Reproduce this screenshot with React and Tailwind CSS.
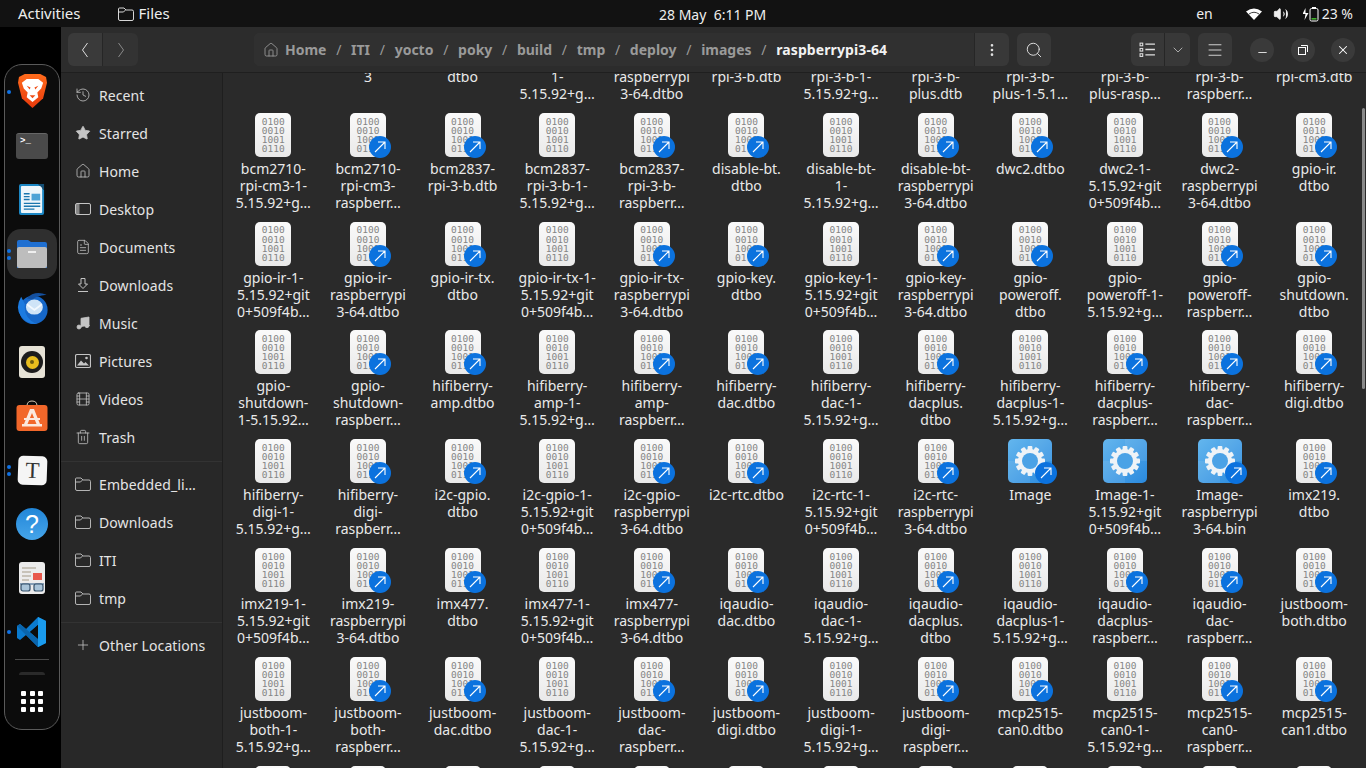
import React from "react";
import { ChevronDown, Search, EllipsisVertical, Menu, X, Minus, Plus, History, Star, House, FileText, Music, Film, Trash2, Volume2 } from "lucide-react";

const L = (lines, real) => ({ lines, link: !real });
const G = (lines, real) => ({ lines, link: !real, gear: true });

const rows = [
  [L([""], true), L(["bcm2710-", "3"]), L(["bcm2711-", "dtbo"]), L(["bcm2711-", "1-", "5.15.92+g…"], true), L(["bcm2711-", "raspberrypi", "3-64.dtbo"]), L(["bcm2837-", "rpi-3-b.dtb"]), L(["bcm2837-", "rpi-3-b-1-", "5.15.92+g…"], true), L(["bcm2837-", "rpi-3-b-", "plus.dtb"]), L(["bcm2837-", "rpi-3-b-", "plus-1-5.1…"], true), L(["bcm2837-", "rpi-3-b-", "plus-rasp…"]), L(["bcm2837-", "rpi-3-b-", "raspberr…"]), L(["bcm2710-", "rpi-cm3.dtb"])],
  [L(["bcm2710-", "rpi-cm3-1-", "5.15.92+g…"], true), L(["bcm2710-", "rpi-cm3-", "raspberr…"]), L(["bcm2837-", "rpi-3-b.dtb"]), L(["bcm2837-", "rpi-3-b-1-", "5.15.92+g…"], true), L(["bcm2837-", "rpi-3-b-", "raspberr…"]), L(["disable-bt.", "dtbo"]), L(["disable-bt-", "1-", "5.15.92+g…"], true), L(["disable-bt-", "raspberrypi", "3-64.dtbo"]), L(["dwc2.dtbo"]), L(["dwc2-1-", "5.15.92+git", "0+509f4b…"], true), L(["dwc2-", "raspberrypi", "3-64.dtbo"]), L(["gpio-ir.", "dtbo"])],
  [L(["gpio-ir-1-", "5.15.92+git", "0+509f4b…"], true), L(["gpio-ir-", "raspberrypi", "3-64.dtbo"]), L(["gpio-ir-tx.", "dtbo"]), L(["gpio-ir-tx-1-", "5.15.92+git", "0+509f4b…"], true), L(["gpio-ir-tx-", "raspberrypi", "3-64.dtbo"]), L(["gpio-key.", "dtbo"]), L(["gpio-key-1-", "5.15.92+git", "0+509f4b…"], true), L(["gpio-key-", "raspberrypi", "3-64.dtbo"]), L(["gpio-", "poweroff.", "dtbo"]), L(["gpio-", "poweroff-1-", "5.15.92+g…"], true), L(["gpio-", "poweroff-", "raspberr…"]), L(["gpio-", "shutdown.", "dtbo"])],
  [L(["gpio-", "shutdown-", "1-5.15.92…"], true), L(["gpio-", "shutdown-", "raspberr…"]), L(["hifiberry-", "amp.dtbo"]), L(["hifiberry-", "amp-1-", "5.15.92+g…"], true), L(["hifiberry-", "amp-", "raspberr…"]), L(["hifiberry-", "dac.dtbo"]), L(["hifiberry-", "dac-1-", "5.15.92+g…"], true), L(["hifiberry-", "dacplus.", "dtbo"]), L(["hifiberry-", "dacplus-1-", "5.15.92+g…"], true), L(["hifiberry-", "dacplus-", "raspberr…"]), L(["hifiberry-", "dac-", "raspberr…"]), L(["hifiberry-", "digi.dtbo"])],
  [L(["hifiberry-", "digi-1-", "5.15.92+g…"], true), L(["hifiberry-", "digi-", "raspberr…"]), L(["i2c-gpio.", "dtbo"]), L(["i2c-gpio-1-", "5.15.92+git", "0+509f4b…"], true), L(["i2c-gpio-", "raspberrypi", "3-64.dtbo"]), L(["i2c-rtc.dtbo"]), L(["i2c-rtc-1-", "5.15.92+git", "0+509f4b…"], true), L(["i2c-rtc-", "raspberrypi", "3-64.dtbo"]), G(["Image"]), G(["Image-1-", "5.15.92+git", "0+509f4b…"], true), G(["Image-", "raspberrypi", "3-64.bin"]), L(["imx219.", "dtbo"])],
  [L(["imx219-1-", "5.15.92+git", "0+509f4b…"], true), L(["imx219-", "raspberrypi", "3-64.dtbo"]), L(["imx477.", "dtbo"]), L(["imx477-1-", "5.15.92+git", "0+509f4b…"], true), L(["imx477-", "raspberrypi", "3-64.dtbo"]), L(["iqaudio-", "dac.dtbo"]), L(["iqaudio-", "dac-1-", "5.15.92+g…"], true), L(["iqaudio-", "dacplus.", "dtbo"]), L(["iqaudio-", "dacplus-1-", "5.15.92+g…"], true), L(["iqaudio-", "dacplus-", "raspberr…"]), L(["iqaudio-", "dac-", "raspberr…"]), L(["justboom-", "both.dtbo"])],
  [L(["justboom-", "both-1-", "5.15.92+g…"], true), L(["justboom-", "both-", "raspberr…"]), L(["justboom-", "dac.dtbo"]), L(["justboom-", "dac-1-", "5.15.92+g…"], true), L(["justboom-", "dac-", "raspberr…"]), L(["justboom-", "digi.dtbo"]), L(["justboom-", "digi-1-", "5.15.92+g…"], true), L(["justboom-", "digi-", "raspberr…"]), L(["mcp2515-", "can0.dtbo"]), L(["mcp2515-", "can0-1-", "5.15.92+g…"], true), L(["mcp2515-", "can0-", "raspberr…"]), L(["mcp2515-", "can1.dtbo"])],
  [L(["mcp2515-"], true), L(["mcp2515-"]), L(["mcp2515-"]), L(["mcp2515-"], true), L(["mcp2515-"]), L(["mcp2515-"]), L(["mcp2515-"], true), L(["mcp2515-"]), L(["mcp2515-"]), L(["mcp2515-"], true), L(["mcp2515-"]), L(["mcp2515-"])],
];

const places = [
  ["Recent", History], ["Starred", StarGlyph], ["Home", House], ["Desktop", DesktopGlyph], ["Documents", FileText],
  ["Downloads", DownloadGlyph], ["Music", MusicGlyph], ["Pictures", PictureGlyph], ["Videos", Film], ["Trash", Trash2],
];
const bookmarks = ["Embedded_li…", "Downloads", "ITI", "tmp"];
const crumbs = ["ITI", "yocto", "poky", "build", "tmp", "deploy", "images"];

function StarGlyph(props) {
  return <Star {...props} fill="currentColor" />;
}

function MusicGlyph(props) {
  return <Music {...props} fill="currentColor" />;
}

function DesktopGlyph(props) {
  return (
    <svg viewBox="0 0 16 16" {...props}>
      <rect x="0.5" y="2.5" width="15" height="11" rx="1.5" fill="none" stroke="currentColor" strokeWidth="1" />
      <rect x="1" y="3" width="3.5" height="10" fill="currentColor" opacity="0.6" />
    </svg>
  );
}

function DownloadGlyph(props) {
  return (
    <svg viewBox="0 0 16 16" {...props} fill="none" stroke="currentColor" strokeWidth="1">
      <path d="M6 1.5 H10 V7 H12.5 L8 11.5 L3.5 7 H6 Z M3 14.5 H13" />
    </svg>
  );
}

function PictureGlyph(props) {
  return (
    <svg viewBox="0 0 16 16" {...props}>
      <rect x="0.5" y="1.5" width="15" height="13" rx="1.5" fill="none" stroke="currentColor" />
      <path d="M2 12.5 L6 7.5 L9 10.5 L10.5 9 L14 12.5 Z" fill="currentColor" />
      <circle cx="11.5" cy="5" r="1.3" fill="currentColor" />
    </svg>
  );
}

function FolderGlyph(props) {
  return (
    <svg viewBox="0 0 16 16" {...props} fill="none" stroke="currentColor" strokeWidth="0.9">
      <path d="M1.5 2 H6 L8 4 H14 Q15.5 4 15.5 5.5 V13 Q15.5 14.5 14 14.5 H2 Q0.5 14.5 0.5 13 V3 Q0.5 2 1.5 2 Z M0.5 6 H5.5 L7.5 4" />
    </svg>
  );
}

function ListGlyph(props) {
  return (
    <svg viewBox="0 0 16 16" {...props} fill="none" stroke="currentColor" strokeWidth="1">
      <rect x="1" y="2" width="2.5" height="2.5" />
      <rect x="1" y="7" width="2.5" height="2.5" />
      <rect x="1" y="12" width="2.5" height="2.5" />
      <path d="M6 3 H15 M6 8 H15 M6 13 H15" strokeWidth="1.2" />
    </svg>
  );
}

function LinkBadge() {
  return (
    <div className="absolute -right-[5px] -bottom-[1px] w-[22px] h-[22px] rounded-full bg-[#0b72de] flex items-center justify-center">
      <svg viewBox="0 0 12 12" className="w-3 h-3" fill="none" stroke="white" strokeWidth="1.1">
        <path d="M1 11 L11 1 M4 1 H11 V8" />
      </svg>
    </div>
  );
}

function BinaryIcon({ link }) {
  return (
    <div className="relative w-9 h-11 rounded-[5px] bg-gradient-to-b from-[#fafafa] to-[#e9e9e9] flex flex-col items-center justify-center font-['DejaVu_Sans_Mono',monospace] text-[9.5px] leading-[9.1px] text-[#858585]">
      <span>0100</span>
      <span>0010</span>
      <span>1001</span>
      <span>0110</span>
      {link && <LinkBadge />}
    </div>
  );
}

function GearIcon({ link }) {
  return (
    <div className="relative w-11 h-11 rounded-[5px] overflow-visible">
      <svg viewBox="0 0 44 44" className="w-11 h-11">
        <defs>
          <linearGradient id="tile" x1="0" y1="0" x2="1" y2="1">
            <stop offset="0" stopColor="#64b6ee" />
            <stop offset="1" stopColor="#2a8ade" />
          </linearGradient>
        </defs>
        <rect width="44" height="44" rx="5" fill="url(#tile)" />
        <path d="M0 22 H22 V44 H5 Q0 44 0 39 Z M22 0 H39 Q44 0 44 5 V22 H22 Z" fill="white" opacity="0.08" />
        <g fill="#eef3f7">
          {[0, 30, 60, 90, 120, 150].map((a) => (
            <rect key={a} x="19.6" y="7" width="4.8" height="30" rx="1" transform={`rotate(${a} 22 22)`} />
          ))}
          <circle cx="22" cy="22" r="12" />
        </g>
        <circle cx="22" cy="22" r="8" fill="#4aa2e6" />
      </svg>
      {link && <LinkBadge />}
    </div>
  );
}

function FileCell({ file }) {
  return (
    <div className="flex flex-col items-center min-w-0">
      <div className="h-11 flex items-center justify-center">
        {file.gear ? <GearIcon link={file.link} /> : <BinaryIcon link={file.link} />}
      </div>
      <div className="mt-[3px] text-center text-[14px] leading-[17px] text-[#e9e9e9] whitespace-nowrap">
        {file.lines.map((l, i) => (
          <div key={i}>{l || "\u00a0"}</div>
        ))}
      </div>
    </div>
  );
}

function DockIcon({ children, dots = 0, active }) {
  return (
    <div className={`relative w-[50px] h-[50px] flex items-center justify-center rounded-[14px] ${active ? "bg-[#2f2f2f]" : ""}`}>
      {dots > 0 && (
        <div className="absolute left-0 top-0 bottom-0 flex flex-col justify-center gap-[3px]">
          {Array.from({ length: dots }).map((_, i) => (
            <span key={i} className="block w-1 h-1 rounded-full bg-[#0f72e5]" />
          ))}
        </div>
      )}
      {children}
    </div>
  );
}

function Dock() {
  return (
    <div className="w-[61px] shrink-0 bg-black pt-[37px]">
      <div className="ml-[4px] w-[56px] h-[666px] rounded-[18px] border border-[#5a5a5a] bg-[#0c0c0c] flex flex-col items-center pt-[2px] gap-[4px]">
        <DockIcon dots={1}>
          <svg viewBox="0 0 30 35" className="w-[29px] h-[34px] -translate-y-px">
            <defs>
              <linearGradient id="br" x1="0" y1="0" x2="0" y2="1">
                <stop offset="0" stopColor="#ff6b1c" />
                <stop offset="1" stopColor="#e83a0c" />
              </linearGradient>
            </defs>
            <path d="M7 0 H23 L29 3 L30 9 L26 25 L15 35 L4 25 L0 9 L1 3 Z" fill="url(#br)" />
            <path d="M4 9 L9 5 H21 L26 9 L24 15 L20 19 L21 24 L15 29 L9 24 L10 19 L6 15 Z" fill="white" />
            <path d="M9 12 L13 14 L12 16 Z M21 12 L17 14 L18 16 Z M12 22 H18 L15 25 Z" fill="#f0501a" />
          </svg>
        </DockIcon>
        <DockIcon>
          <div className="w-8 h-[26px] rounded-[3px] bg-[#4a4a4a] border-t border-[#666] text-white font-['Liberation_Mono',monospace] text-[9px] leading-[12px] pl-1 pt-[1px] font-bold">&gt;_</div>
        </DockIcon>
        <DockIcon>
          <svg viewBox="0 0 28 33" className="w-[27px] h-[32px]">
            <path d="M2 0 H20 L26 6 V30 Q26 32 24 32 H2 Q0 32 0 30 V2 Q0 0 2 0 Z" fill="#1c87c4" />
            <rect x="2" y="2" width="22" height="28" rx="1" fill="#eef6fb" />
            <path d="M20 0 L26 0 L26 6 Z" fill="#144e74" />
            <rect x="13" y="10" width="9" height="7" fill="#4ea3d6" />
            <path d="M5 10 H11 M5 13 H11 M5 16 H11 M5 20 H22 M5 23 H22 M5 26 H16" stroke="#1a76ae" strokeWidth="1.4" />
          </svg>
        </DockIcon>
        <DockIcon dots={2} active>
          <svg viewBox="0 0 32 30" className="w-[32px] h-[30px]">
            <path d="M1 3 Q1 1 3 1 H12 L15 3 H29 Q31 3 31 5 V29 H1 Z" fill="#1f6fd1" />
            <rect x="1" y="8" width="30" height="21" rx="2" fill="#bdbdbd" />
            <rect x="12" y="12" width="8" height="2" fill="#efefef" />
          </svg>
        </DockIcon>
        <DockIcon>
          <svg viewBox="0 0 36 36" className="w-[35px] h-[34px]">
            <circle cx="19" cy="20" r="15" fill="#1667c8" />
            <path d="M6 6 Q-1 18 6 27 Q12 35 22 35 Q8 28 10 14 Z" fill="#1c7be0" />
            <path d="M12 8 Q20 -1 33 4 Q22 5 18 9 Z" fill="#14509f" />
            <ellipse cx="20" cy="17" rx="9" ry="8" fill="#cfe4f7" />
            <path d="M12 14 L20 20 L28 14" fill="none" stroke="#f3f9fe" strokeWidth="2" />
          </svg>
        </DockIcon>
        <DockIcon>
          <div className="w-[26px] h-8 rounded-[3px] bg-[#e6e2d6] flex items-center justify-center">
            <div className="w-[22px] h-[22px] rounded-full bg-[#1c1c1c] flex items-center justify-center">
              <div className="w-[13px] h-[13px] rounded-full bg-[#e8bd1e] flex items-center justify-center">
                <div className="w-1 h-1 rounded-full bg-[#6b5a10]" />
              </div>
            </div>
          </div>
        </DockIcon>
        <DockIcon>
          <svg viewBox="0 0 32 32" className="w-8 h-8">
            <path d="M11 6 Q11 1 16 1 Q21 1 21 6" fill="none" stroke="#d9c9b5" strokeWidth="1" />
            <rect x="0.5" y="5" width="31" height="26" rx="3" fill="#f2672a" />
            <path d="M14 9 H18 L24 24 H20.5 L16 13 L11.5 24 H8 Z M8 18 H24 V20 H8 Z M6 24 H26 V26.5 H6 Z" fill="#fbe9df" />
          </svg>
        </DockIcon>
        <DockIcon dots={2}>
          <div className="w-[29px] h-[29px] rounded-[5px] bg-[#f5f5f5] rotate-[2deg] flex items-center justify-center font-['Liberation_Serif',serif] text-[23px] text-[#333] leading-none">T</div>
        </DockIcon>
        <DockIcon>
          <div className="w-8 h-8 rounded-full bg-gradient-to-b from-[#2186d8] to-[#45a5ea] flex items-center justify-center text-white text-[25px] leading-none font-['Liberation_Sans',sans-serif]">?</div>
        </DockIcon>
        <DockIcon>
          <svg viewBox="0 0 26 32" className="w-[26px] h-8">
            <rect width="26" height="32" rx="3" fill="#ececec" />
            <path d="M3 6 H17 M3 10 H12 M3 14 H12 M3 18 H10" stroke="#a49a86" strokeWidth="1.2" />
            <rect x="14" y="11" width="9" height="7" fill="#e8584c" />
            <path d="M1 22 H25" stroke="#5c7fa0" strokeWidth="1.4" />
            <rect x="2" y="22" width="9" height="7" rx="2" fill="#a9c4d9" stroke="#34506a" strokeWidth="1.2" />
            <rect x="15" y="22" width="9" height="7" rx="2" fill="#a9c4d9" stroke="#34506a" strokeWidth="1.2" />
          </svg>
        </DockIcon>
        <DockIcon dots={1}>
          <svg viewBox="0 0 30 30" className="w-[30px] h-[30px]">
            <path d="M21 0 L29 4 V26 L21 30 L9 18 L3 23 L0 21 V9 L3 7 L9 12 Z M21 8 L13 15 L21 22 Z" fill="#0a7bd0" />
            <path d="M21 0 L29 4 V26 L21 30 Z" fill="#1a9bee" />
            <path d="M21 8 L21 22 L13 15 Z" fill="#0c0c0c" />
            <path d="M0 9 L3 7 L21 22 V30 Z" fill="#0a65ad" />
          </svg>
        </DockIcon>
        <div className="w-[34px] h-px bg-[#4a4a4a] -mt-[2px]" />
        <div className="w-[26px] h-[3px] rounded-t-full bg-[#2a2a2a] mt-[8px]" />
        <div className="grid grid-cols-3 gap-x-[3.5px] gap-y-[3px] mt-[12px]">
          {Array.from({ length: 9 }).map((_, i) => (
            <span key={i} className="w-[5px] h-[5px] rounded-[1px] bg-white" />
          ))}
        </div>
      </div>
    </div>
  );
}

function TopBar() {
  return (
    <div className="relative h-[27px] shrink-0 bg-[#121212] text-[#eeeeee] text-[14px] flex items-center">
      <span className="ml-[18px] text-[15px]">Activities</span>
      <FolderGlyph className="ml-[37px] w-4 h-4" />
      <span className="ml-[5px] text-[15px]">Files</span>
      <span className="absolute left-[659px] top-[4px]">28 May&nbsp;&nbsp;6:11 PM</span>
      <div className="ml-auto flex items-center mr-[13px]">
        <span className="mr-[33px]">en</span>
        <svg viewBox="0 0 16 12" className="w-4 h-3 mr-[11px]">
          <path d="M0 3.5 Q8 -2.5 16 3.5 L8 12 Z" fill="white" />
          <path d="M3 6 Q8 2.5 13 6" fill="none" stroke="#121212" strokeWidth="0.8" />
        </svg>
        <Volume2 className="w-4 h-4 mr-[14px]" fill="currentColor" strokeWidth={1.3} />
        <svg viewBox="0 0 16 16" className="w-4 h-4 mr-[3px]">
          <path d="M3 2 L0 8 H3 L2 14 L6 7 H3 Z" fill="white" transform="translate(-0.5 0)" />
          <rect x="7" y="2.5" width="8" height="12.5" rx="1.5" fill="none" stroke="white" />
          <rect x="9" y="1" width="4" height="1.5" fill="white" />
          <rect x="8.5" y="12" width="5" height="1.6" fill="#3fae2a" />
        </svg>
        <span>23 %</span>
      </div>
    </div>
  );
}

function Header() {
  return (
    <div className="h-[46px] shrink-0 bg-[#2c2c2c] border-b border-[#1f1f1f] flex items-center text-[#c8c8c8] pr-[11px]">
      <div className="ml-[7px] flex h-[33px] w-[70px] rounded-[6px] overflow-hidden bg-[#333333]">
        <div className="w-[35px] flex items-center justify-center border-r border-[#262626] bg-[#3a3a3a] text-[#dddddd]">
          <svg viewBox="0 0 8 16" className="w-2 h-4" fill="none" stroke="currentColor"><path d="M6.5 1 L1.5 8 L6.5 15" /></svg>
        </div>
        <div className="w-[35px] flex items-center justify-center text-[#8a8a8a]">
          <svg viewBox="0 0 8 16" className="w-2 h-4" fill="none" stroke="currentColor"><path d="M1.5 1 L6.5 8 L1.5 15" /></svg>
        </div>
      </div>
      <div className="ml-[116px] w-[755px] h-[33px] rounded-[6px] bg-[#383838] flex items-center">
        <div className="flex-1 flex items-center h-full pl-[9px] text-[14px] font-bold text-[#9a9a9a] bg-[#303030] rounded-l-[6px] border-r border-[#262626]">
          <House className="w-4 h-4 mr-[6px]" strokeWidth={1.3} />
          <span>Home</span>
          {crumbs.map((c) => (
            <span key={c} className="flex items-center">
              <span className="mx-[9.7px] font-normal">/</span>
              <span>{c}</span>
            </span>
          ))}
          <span className="mx-[9.7px] font-normal">/</span>
          <span className="text-[#f2f2f2] tracking-[0.1px]">raspberrypi3-64</span>
        </div>
        <div className="w-[34px] flex items-center justify-center">
          <EllipsisVertical className="w-4 h-4 text-[#e0e0e0]" strokeWidth={2} />
        </div>
      </div>
      <div className="ml-[8px] w-[34px] h-[33px] rounded-[6px] bg-[#383838] flex items-center justify-center">
        <Search className="w-[18px] h-[18px] text-[#dddddd]" strokeWidth={1.3} />
      </div>
      <div className="ml-[80px] flex h-[33px] w-[59px] rounded-[6px] overflow-hidden bg-[#383838]">
        <div className="w-[34px] flex items-center justify-center border-r border-[#262626]"><ListGlyph className="w-[17px] h-[17px] text-[#e0e0e0]" /></div>
        <div className="flex-1 flex items-center justify-center"><ChevronDown className="w-4 h-4" strokeWidth={1.2} /></div>
      </div>
      <div className="ml-[8px] w-[34px] h-[33px] rounded-[6px] bg-[#383838] flex items-center justify-center">
        <Menu className="w-[18px] h-[18px] text-[#e0e0e0]" strokeWidth={1.2} />
      </div>
      <div className="ml-auto flex gap-[16.5px]">
        <div className="w-6 h-6 rounded-full bg-[#3a3a3a] flex items-center justify-center"><Minus className="w-[13px] h-[13px] text-white translate-y-[3px]" strokeWidth={1.5} /></div>
        <div className="w-6 h-6 rounded-full bg-[#3a3a3a] flex items-center justify-center">
          <svg viewBox="0 0 10 10" className="w-[10px] h-[10px]" fill="none" stroke="white"><rect x="0.5" y="2.5" width="7" height="7" /><path d="M3 0.5 H9.5 V7" /></svg>
        </div>
        <div className="w-6 h-6 rounded-full bg-[#3a3a3a] flex items-center justify-center"><X className="w-[14px] h-[14px] text-white" strokeWidth={1.8} /></div>
      </div>
    </div>
  );
}

function SideRow({ icon: Icon, label }) {
  return (
    <div className="h-[38px] flex items-center pl-[14px] text-[14px] tracking-[0.1px] text-[#e4e4e4]">
      <Icon className="w-4 h-4 text-[#c4c4c4] shrink-0" strokeWidth={1.2} />
      <span className="ml-2">{label}</span>
    </div>
  );
}

function Sidebar() {
  return (
    <div className="w-[162px] shrink-0 bg-[#282828] border-r border-[#1e1e1e] pt-[3px]">
      {places.map(([label, Icon]) => (
        <SideRow key={label} icon={Icon} label={label} />
      ))}
      <div className="h-px bg-[#333333] mt-[5px] mb-[3px]" />
      {bookmarks.map((b) => (
        <SideRow key={b} icon={FolderGlyph} label={b} />
      ))}
      <div className="h-px bg-[#333333] mt-[5px] mb-[3px]" />
      <SideRow icon={Plus} label="Other Locations" />
    </div>
  );
}

export default function App() {
  return (
    <div className="w-[1366px] h-[768px] overflow-hidden flex flex-col bg-black font-['Noto_Sans',sans-serif]">
      <TopBar />
      <div className="flex flex-1 min-h-0">
        <Dock />
        <div className="flex-1 min-w-0 flex flex-col">
          <Header />
          <div className="flex flex-1 min-h-0">
            <Sidebar />
            <div className="relative flex-1 min-w-0 overflow-hidden bg-[#2a2a2a] pl-[3px]">
              <div className="-mt-[69px] grid grid-cols-[repeat(12,94.64px)] auto-rows-[108.8px]">
                {rows.flat().map((f, i) => (
                  <FileCell key={i} file={f} />
                ))}
              </div>
              <div className="absolute right-[1px] top-[35px] w-[3px] h-[281px] rounded-full bg-[#8a8a8a]" />
            </div>
          </div>
        </div>
      </div>
    </div>
  );
}
